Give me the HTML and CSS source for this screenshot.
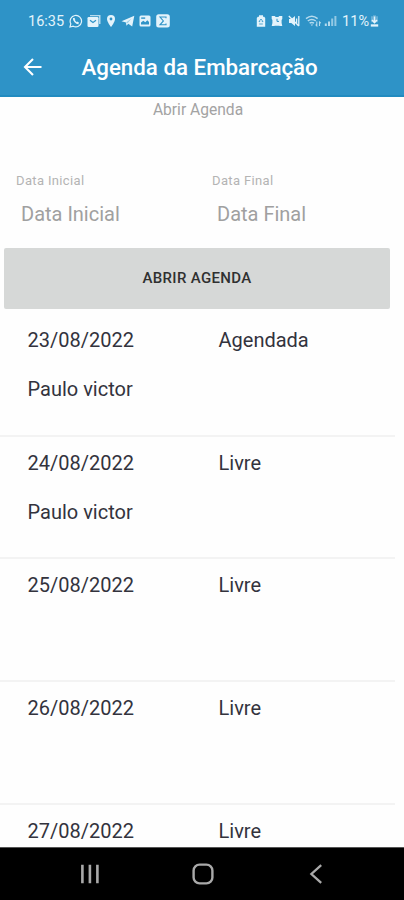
FILE: index.html
```html
<!DOCTYPE html>
<html lang="pt-BR">
<head>
  <meta charset="UTF-8" />
  <meta name="viewport" content="width=device-width, initial-scale=1.0"/>
  <title>Agenda da Embarcação</title>
  <link rel="stylesheet" href="styles.css">
</head>

<body>

  <header class="top">
    <div class="status-bar">
      <div class="status-left">
        <span class="clock">16:35</span>
        <!-- WhatsApp -->
        <svg width="14" height="14" viewBox="0 0 14 14" fill="none" stroke="currentColor">
          <path d="M1 13l.8-3.2A5.7 5.7 0 1 1 4.2 12.2z" stroke-width="1.2"/>
          <path d="M4.7 4.2c-.5 2.2 2.7 5.5 4.9 5.2M4.7 4.2l1 1.6M9.6 9.4L8 8.2" stroke-width="1.5"/>
        </svg>
        <!-- Mail -->
        <svg width="14" height="14" viewBox="0 0 14 14">
          <path d="M3 2.2V1h10.5v9H12V2.2z" fill="currentColor" opacity=".75"/>
          <rect x=".5" y="3" width="11" height="10" rx="1.2" fill="currentColor"/>
          <path d="M3 6.2L6 8.4 9 6.2" fill="none" stroke="#2e93c7" stroke-width="1.2"/>
        </svg>
        <!-- Location -->
        <svg width="14" height="14" viewBox="0 0 14 14">
          <path d="M7 1a4 4 0 0 0-4 4c0 3 4 8 4 8s4-5 4-8a4 4 0 0 0-4-4z" fill="currentColor"/>
          <circle cx="7" cy="5" r="1.4" fill="#2e93c7"/>
        </svg>
        <!-- Telegram -->
        <svg width="14" height="14" viewBox="0 0 14 14">
          <path d="M.5 7.2L13.3 1.8 11.2 12.6 7.3 9.8 5.4 11.7 5 8.6z" fill="currentColor"/>
          <path d="M5 8.6L10.5 4.5 6.6 9.2" fill="#2e93c7" opacity=".4"/>
        </svg>
        <!-- Gallery -->
        <svg width="14" height="14" viewBox="0 0 14 14">
          <rect x="1.5" y="1.5" width="11" height="11" rx="1.5" fill="currentColor"/>
          <path d="M3 10.5V8.6l2.3-1.8 2 1.4 2-2L11 8v2.5z" fill="#2e93c7"/>
          <rect x="3.2" y="3.4" width="4" height="1.4" fill="#2e93c7"/>
        </svg>
        <!-- Sigma -->
        <svg width="14" height="14" viewBox="0 0 14 14">
          <rect x=".2" y=".2" width="13.6" height="13.4" rx="2.5" fill="currentColor"/>
          <path d="M10 4.3V3H4l3.4 3.9L4 10.8h6V9.5" fill="none" stroke="#2e93c7" stroke-width="1.1"/>
        </svg>
      </div>
      <div class="status-right">
        <!-- Battery saver -->
        <svg width="10" height="14" viewBox="0 0 10 14">
          <path d="M3 1.2h4v1.6h1.2l1 1.2v8.8H.8V4l1-1.2H3z" fill="currentColor"/>
          <path d="M5 5L3 7.6h1.2M5 5l2 2.6H5.8M3.2 10h3.6" fill="none" stroke="#2e93c7" stroke-width=".8"/>
        </svg>
        <!-- Alarm -->
        <svg width="12" height="14" viewBox="0 0 12 14">
          <path d="M.7 2h3l1 1h2.6l1-1h3v3l-.7 1v3l.7 3H9L8 11.7H4l-1 .3H.7l.7-3V6l-.7-1z" fill="currentColor"/>
          <path d="M6 4.8v2.6h2" fill="none" stroke="#2e93c7"/>
        </svg>
        <!-- Muted -->
        <svg width="12" height="14" viewBox="0 0 12 14">
          <path d="M1 5h2.3L7 2v10L3.3 9H1z" fill="currentColor"/>
          <path d="M.8 2l10 10M8.6 4.5v5M10.8 2v10" fill="none" stroke="currentColor" stroke-width="1.3"/>
        </svg>
        <!-- Wi-Fi -->
        <svg class="wifi" width="17" height="14" viewBox="0 0 17 14" fill="none" stroke="currentColor">
          <path d="M1 4.6c3.6-3 8-3 11.6 0M2.8 7c2.6-2 5.4-2 8 0M4.6 9.2c1.6-1.1 2.8-1.1 4.4 0" stroke-width="1.5"/>
          <path d="M5.6 10.4h2.6L6.9 12z" fill="currentColor" stroke="none"/>
          <path d="M11.8 7.5v4.3l-1.2-1.2M14.5 12V8l1.3 1.2" stroke-width="1.1"/>
        </svg>
        <!-- Signal -->
        <svg class="signal" width="13" height="14" viewBox="0 0 13 14" fill="currentColor">
          <path d="M.8 9.5h2V12h-2zM4 7.5h2V12H4z"/>
          <path d="M7.2 4.5h2V12h-2zM10.4 2h2v10h-2z" opacity=".75"/>
        </svg>
        <span class="percent">11%</span>
        <!-- Battery -->
        <svg class="battery" width="9" height="14" viewBox="0 0 9 14">
          <path d="M3 1.2h3v1h2v6H1v-6h2z" fill="currentColor" opacity=".3"/>
          <path d="M4.5 2.5v6M2 6l2.5 2.6L7 6" fill="none" stroke="currentColor" stroke-width="1.5"/>
          <path d="M.8 10.3h7.4v2.3H.8z" fill="currentColor"/>
        </svg>
      </div>
    </div>

    <div class="app-bar">
      <svg class="back" width="20" height="18" viewBox="0 0 20 18" fill="none" stroke="currentColor" stroke-width="2.1">
        <path d="M18.5 9H2M10 1L2 9l8 8"/>
      </svg>
      <h1>Agenda da Embarcação</h1>
    </div>
  </header>

  <main>
    <p class="subtitle">Abrir Agenda</p>

    <form class="filters">
      <div class="field">
        <label for="inicio">Data Inicial</label>
        <input type="text" id="inicio" placeholder="Data Inicial">
      </div>
      <div class="field">
        <label for="fim">Data Final</label>
        <input type="text" id="fim" placeholder="Data Final">
      </div>
      <button type="button">ABRIR AGENDA</button>
    </form>

    <ul class="agenda">
      <li>
        <span>23/08/2022</span>
        <span>Agendada</span>
        <span>Paulo victor</span>
      </li>
      <li>
        <span>24/08/2022</span>
        <span>Livre</span>
        <span>Paulo victor</span>
      </li>
      <li>
        <span>25/08/2022</span>
        <span>Livre</span>
      </li>
      <li>
        <span>26/08/2022</span>
        <span>Livre</span>
      </li>
      <li>
        <span>27/08/2022</span>
        <span>Livre</span>
      </li>
    </ul>
  </main>

  <!-- Android navigation -->
  <nav class="nav-bar">
    <svg width="22" height="22" viewBox="0 0 22 22" fill="none" stroke="currentColor" stroke-width="2.6">
      <path d="M3.4 1.8v18.4M10.9 1.8v18.4M18.4 1.8v18.4"/>
    </svg>
    <svg width="22" height="22" viewBox="0 0 22 22" fill="none" stroke="currentColor" stroke-width="2.4">
      <rect x="1.6" y="1.6" width="18.8" height="18.8" rx="6"/>
    </svg>
    <svg width="22" height="22" viewBox="0 0 22 22" fill="none" stroke="currentColor" stroke-width="2.3">
      <path d="M16.2 2.2L6.4 11l9.8 8.8"/>
    </svg>
  </nav>

</body>
</html>
```
FILE: styles.css
```css
* {
  box-sizing: border-box;
}

body {
  margin: 0;
  height: 900px;
  display: flex;
  flex-direction: column;
  overflow: hidden;
  background-color: #fefefe;
  font-family: Roboto, "Liberation Sans", sans-serif;
  color: #33333d;
}

svg {
  display: block;
  flex: none;
}

/* Header */
.top {
  flex: none;
  height: 97px;
  background-color: #2e93c7;
  border-bottom: 2px solid #218bc0;
  color: #fff;
}

.status-bar {
  display: flex;
  justify-content: space-between;
  height: 42px;
  padding: 0 25px 0 28px;
  color: #e3f3fb;
}

.status-left,
.status-right {
  display: flex;
  align-items: center;
}

.status-left {
  gap: 3.3px;
}

.status-right {
  gap: 5px;
}

.clock {
  width: 38px;
  font-size: 14.5px;
}

.percent {
  font-size: 14.5px;
}

.wifi,
.signal {
  opacity: 0.75;
}

.signal {
  margin-left: -3px;
}

.battery {
  margin-left: -4px;
}

.app-bar {
  display: flex;
  align-items: center;
  height: 50px;
  padding-left: 22.5px;
}

.back {
  margin-right: 39px;
}

h1 {
  margin: 0;
  font-size: 22.3px;
  font-weight: 500;
  white-space: nowrap;
}

/* Content */
main {
  flex: 1;
  min-height: 0;
  overflow: hidden;
}

.subtitle {
  margin: 0;
  padding-right: 8px;
  height: 75px;
  font-size: 15.6px;
  line-height: 26px;
  text-align: center;
  color: #a3a3a3;
}

.filters {
  display: grid;
  grid-template-columns: 196px 1fr;
}

.field {
  height: 76px;
  padding-left: 16px;
}

label {
  display: block;
  font-size: 13px;
  letter-spacing: 0.35px;
  line-height: 17px;
  color: #b4b4b4;
}

input {
  display: block;
  width: 170px;
  height: 30px;
  margin-top: 10px;
  padding: 0 0 0 5px;
  border: none;
  background: none;
  font-family: inherit;
  font-size: 20px;
}

input::placeholder {
  color: #a0a0a0;
}

button {
  grid-column: 1 / 3;
  height: 60.5px;
  margin: 0 14px 0 4px;
  padding: 0;
  border: none;
  border-radius: 2px;
  background-color: #d6d8d7;
  font-family: inherit;
  font-size: 15px;
  font-weight: 500;
  letter-spacing: 0.35px;
  color: #303030;
}

.agenda {
  list-style: none;
  width: 395px;
  margin: 5.5px 0 0;
  padding: 0;
}

.agenda li {
  display: grid;
  grid-template-columns: 191px 1fr;
  align-content: start;
  row-gap: 21px;
  height: 122.7px;
  padding: 12px 0 0 27.5px;
  border-bottom: 2px solid #f3f3f3;
  font-size: 20px;
  line-height: 28px;
}

/* Bottom navigation */
.nav-bar {
  flex: none;
  display: flex;
  justify-content: space-between;
  align-items: center;
  height: 53px;
  padding: 0 77px 0 79px;
  border-top: 1px solid #555;
  background-color: #000;
  color: #a9a9a9;
}
```
